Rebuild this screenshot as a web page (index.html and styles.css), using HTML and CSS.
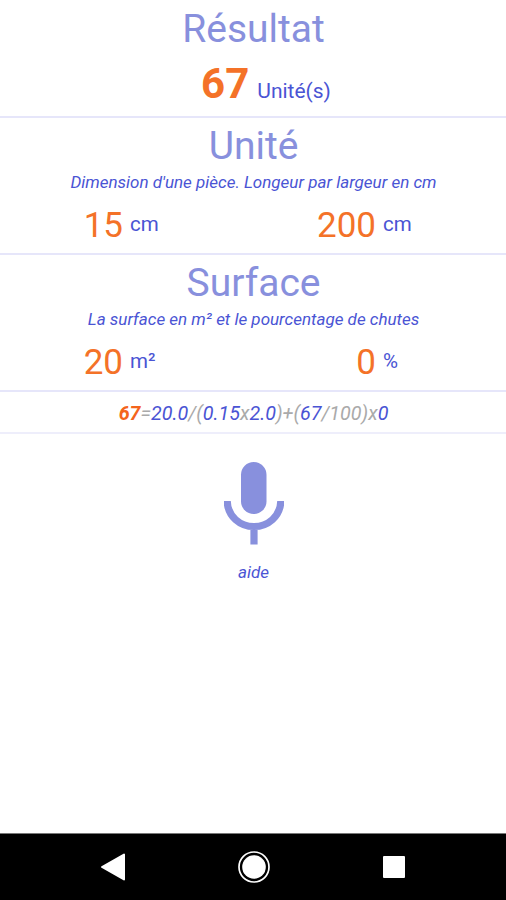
FILE: index.html
```html
<!DOCTYPE html>
<html lang="fr">
<head>
    <meta charset="UTF-8">
    <meta name="viewport" content="width=device-width, initial-scale=1.0">
    <title>Calcul de surface</title>
    <link rel="stylesheet" href="styles.css">
</head>
<body>
    <main class="content">
        <section class="block result">
            <h2>Résultat</h2>
            <div class="total"><span class="number">67</span><span class="unit">Unité(s)</span></div>
        </section>
        <section class="block piece">
            <h2>Unité</h2>
            <p class="hint">Dimension d'une pièce. Longeur par largeur en cm</p>
            <div class="values">
                <div class="value"><span class="number">15</span><span class="unit">cm</span></div>
                <div class="value"><span class="number">200</span><span class="unit">cm</span></div>
            </div>
        </section>
        <section class="block surface">
            <h2>Surface</h2>
            <p class="hint">La surface en m² et le pourcentage de chutes</p>
            <div class="values">
                <div class="value"><span class="number">20</span><span class="unit">m²</span></div>
                <div class="value"><span class="number">0</span><span class="unit">%</span></div>
            </div>
        </section>
        <div class="formula"><b>67</b>=<i>20.0</i>/(<i>0.15</i>x<i>2.0</i>)+(<i>67</i>/100)x<i>0</i></div>
        <div class="voice">
            <svg class="mic" viewBox="0 0 60 84" width="60" height="84">
                <rect x="17" y="0" width="25.500" height="52" rx="12.750" fill="#8890dd"/>
                <path d="M3.200 39C3.700 54.500 16 64.500 30 64.500S56.300 54.500 56.800 39M30 65V82.500" fill="none" stroke="#8890dd" stroke-width="7.200"/>
            </svg>
            <a class="help">aide</a>
        </div>
    </main>
    <nav class="navbar">
        <svg viewBox="0 0 28 28" width="28" height="28"><path d="M3 14L25 1.500V26.500Z" fill="#fff" stroke="#fff" stroke-width="2" stroke-linejoin="round"/></svg>
        <svg viewBox="0 0 34 34" width="34" height="34"><circle cx="17" cy="17" r="15" fill="none" stroke="#fff" stroke-width="1.700"/><circle cx="17" cy="17" r="11.800" fill="#fff"/></svg>
        <svg viewBox="0 0 22 22" width="22" height="22"><rect width="22" height="22" rx="1" fill="#fff"/></svg>
    </nav>
</body>
</html>
```
FILE: styles.css
```css
* {
    box-sizing: border-box;
}
body {
    margin: 0;
    height: 900px;
    display: flex;
    flex-direction: column;
    font-family: Roboto, sans-serif;
    background-color: #fff;
    color: #4a54d4;
    overflow: hidden;
}
.content {
    flex: 1;
}
.block {
    height: 137px;
    border-bottom: 2px solid #e6e6fa;
    text-align: center;
}
.result {
    height: 118px;
    padding-top: 1px;
}
h2 {
    margin: 0;
    padding: 5px 0 0 1px;
    font-size: 39px;
    line-height: 46px;
    font-weight: 400;
    color: #8890dd;
}
.number {
    font-size: 35px;
    color: #f47228;
}
.unit {
    font-size: 20.5px;
}
.total {
    display: flex;
    justify-content: center;
    align-items: baseline;
    gap: 8px;
    padding-left: 26px;
    line-height: 64px;
}
.total .number {
    font-size: 42px;
    font-weight: 700;
}
.total .unit {
    font-size: 21px;
}
.hint {
    margin: 0;
    padding-left: 1px;
    font-size: 17px;
    line-height: 27px;
    font-style: italic;
}
.values {
    display: grid;
    grid-template-columns: 1fr 1fr;
}
.value {
    display: grid;
    grid-template-columns: 1fr 1fr;
    gap: 7px;
    line-height: 60px;
}
.value .number {
    text-align: right;
}
.value .unit {
    text-align: left;
    line-height: 57px;
}
.formula {
    height: 42px;
    border-bottom: 2px solid #eeeefb;
    text-align: center;
    font-size: 19.7px;
    line-height: 44px;
    padding-left: 1px;
    font-style: italic;
    color: #aaa;
}
.formula b {
    color: #f4641c;
}
.formula i {
    color: #4a54d4;
}
.voice {
    display: flex;
    flex-direction: column;
    align-items: center;
    padding: 28px 0 0 1px;
}
.help {
    margin-top: 16px;
    font-size: 17px;
    line-height: 20px;
    font-style: italic;
}
.navbar {
    height: 67px;
    display: flex;
    justify-content: space-between;
    align-items: center;
    padding: 0 101px 0 99px;
    border-top: 1px solid #777;
    background-color: #000;
}
.navbar svg:nth-child(2) {
    margin-right: 3px;
}
```
